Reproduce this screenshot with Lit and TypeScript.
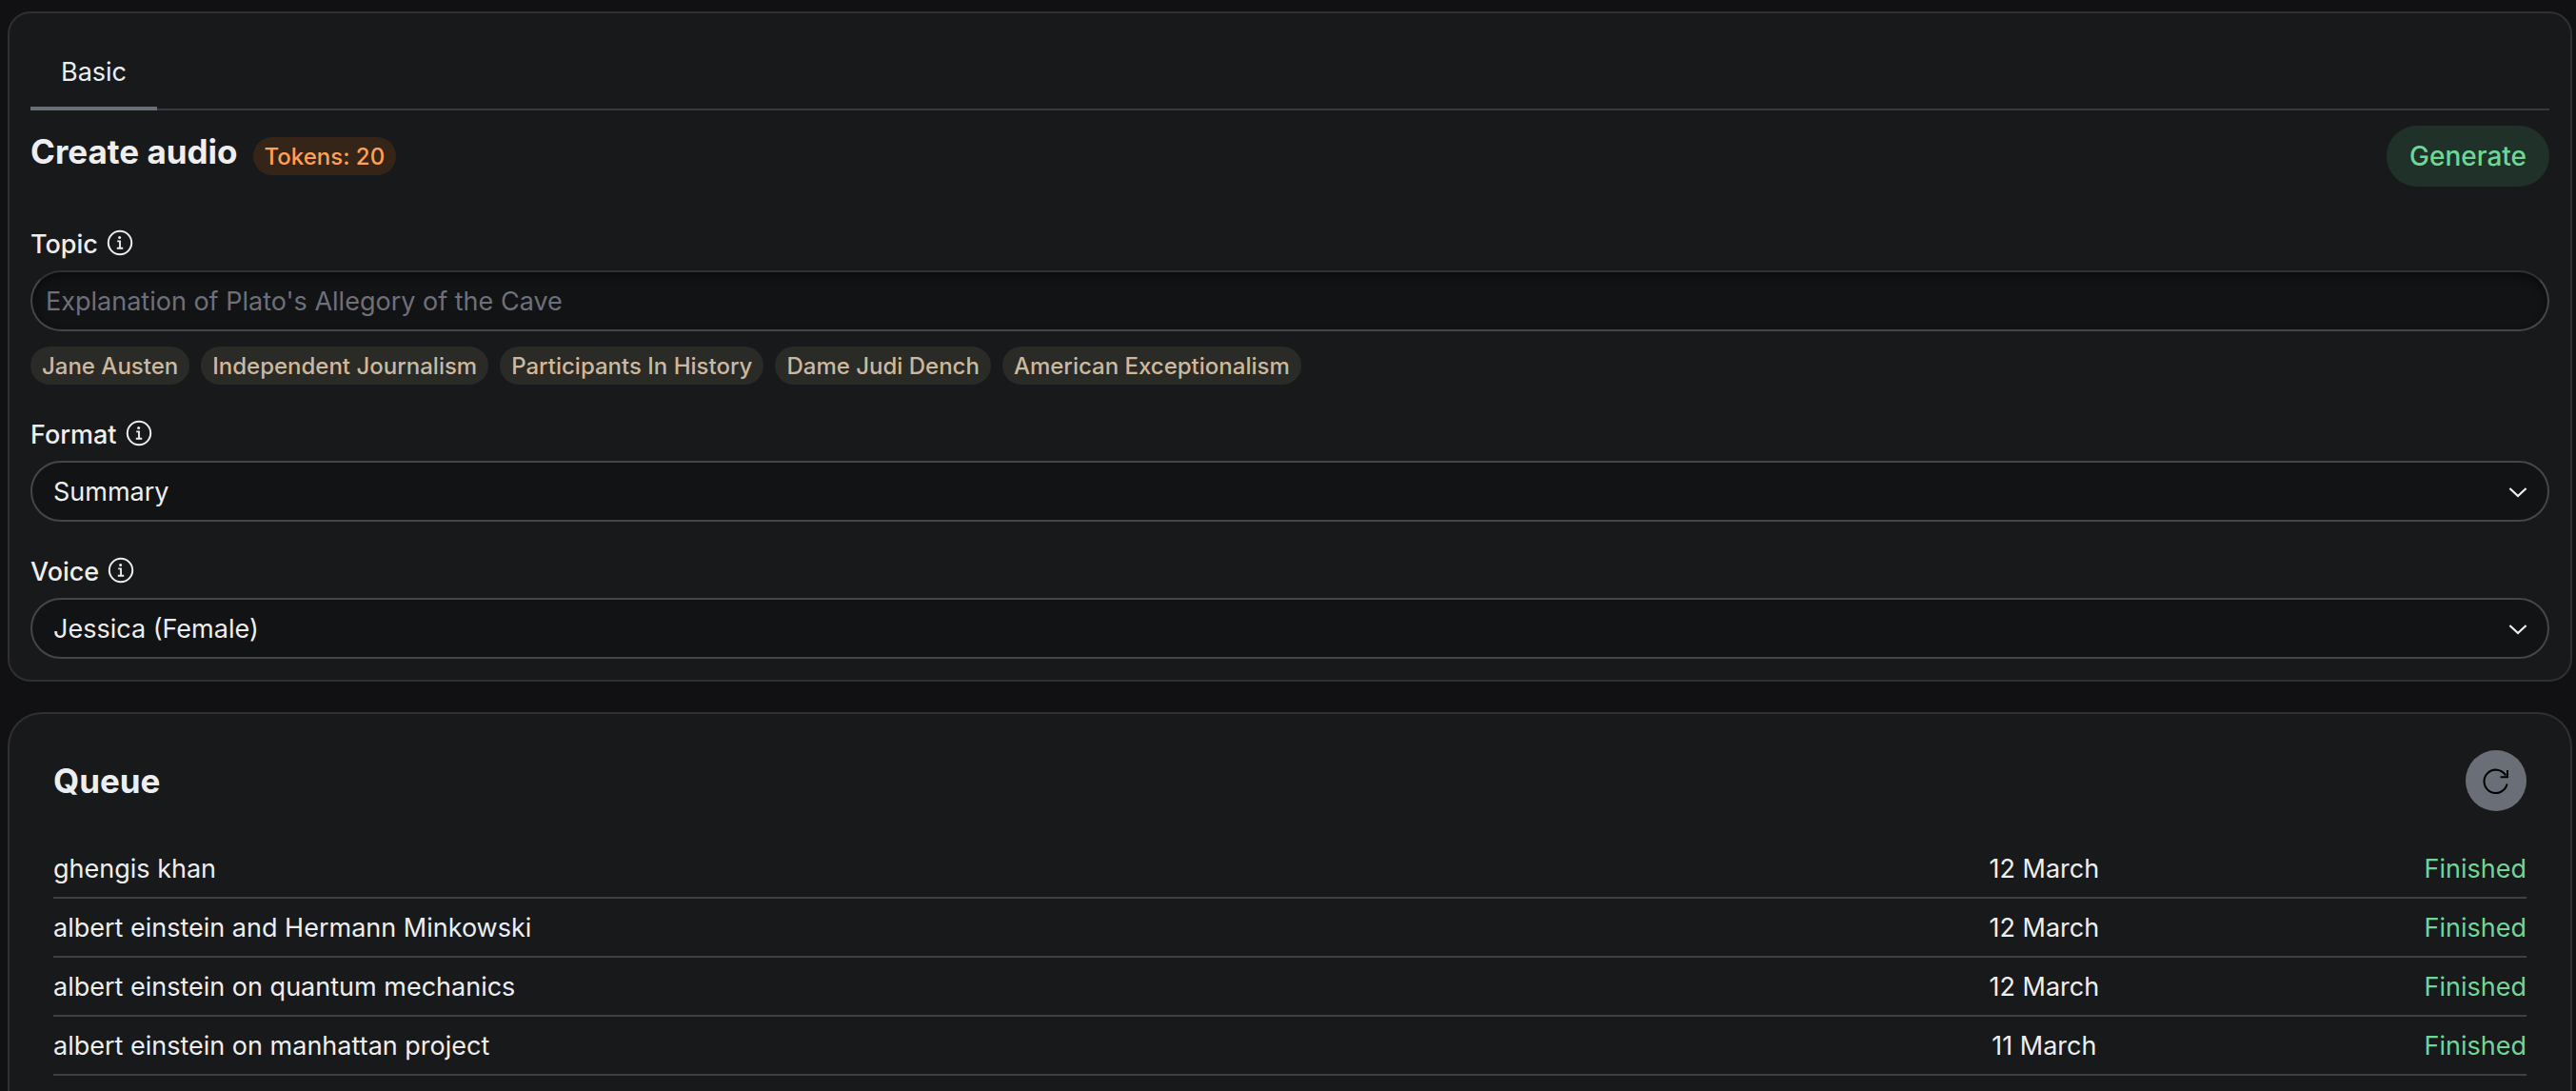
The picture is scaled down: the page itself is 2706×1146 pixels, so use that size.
import { LitElement, html, css, svg } from "lit";
import { customElement, property, state } from "lit/decorators.js";

interface Job {
  topic: string;
  date: string;
  status: string;
}

const SUGGESTIONS = [
  "Jane Austen",
  "Independent Journalism",
  "Participants In History",
  "Dame Judi Dench",
  "American Exceptionalism",
];

const JOBS: Job[] = [
  { topic: "ghengis khan", date: "12 March", status: "Finished" },
  { topic: "albert einstein and Hermann Minkowski", date: "12 March", status: "Finished" },
  { topic: "albert einstein on quantum mechanics", date: "12 March", status: "Finished" },
  { topic: "albert einstein on manhattan project", date: "11 March", status: "Finished" },
];

const infoIcon = svg`
  <circle cx="13" cy="13" r="12.2" fill="none" stroke="currentColor" stroke-width="2"/>
  <circle cx="12.6" cy="7.4" r="1.5" fill="currentColor"/>
  <path d="M10.2 11.4h2.8v7.2M9.8 18.8h6.4" fill="none" stroke="currentColor" stroke-width="1.9"/>`;

@customElement("info-label")
export class InfoLabel extends LitElement {
  @property() text = "";

  static styles = css`
    :host {
      display: flex;
      align-items: center;
      gap: 10px;
      height: 36px;
    }
    .text {
      line-height: 36px;
      padding-top: 2px;
    }
    .icon {
      width: 28px;
      height: 28px;
      flex: none;
      overflow: visible;
    }
  `;

  render() {
    return html`<span class="text">${this.text}</span>
      <svg class="icon" viewBox="0 0 28 28" aria-hidden="true">${infoIcon}</svg>`;
  }
}

@customElement("app-root")
export class AppRoot extends LitElement {
  @state() private topic = "";

  static styles = css`
    :host {
      display: block;
      background: #111113;
      color: #edeef0;
      font-family: Inter, "Liberation Sans", sans-serif;
      font-size: 27px;
      line-height: 36px;
    }
    * {
      box-sizing: border-box;
    }
    button,
    input,
    select {
      font: inherit;
      color: inherit;
      margin: 0;
    }
    .page {
      display: flex;
      flex-direction: column;
      gap: 32px;
      min-height: 100vh;
      padding: 12px 4px 0 8px;
    }
    .card {
      background: #18191b;
      border: 2px solid #2e3035;
      border-radius: 24px;
      padding: 22px;
    }
    .queue {
      flex: 1;
      border-bottom: 0;
      border-radius: 36px 36px 0 0;
      padding: 38px 46px 16px;
    }
    .tabs {
      display: flex;
      height: 80px;
      box-shadow: inset 0 -2px #363a3f;
    }
    .tab {
      border: 0;
      border-bottom: 4px solid #696e77;
      background: none;
      padding: 4px 32px 0;
    }
    .head {
      display: flex;
      align-items: flex-start;
      gap: 16px;
      margin-top: 16px;
      height: 64px;
    }
    .title {
      margin: 0;
      font-size: 35px;
      line-height: 54px;
      font-weight: 700;
    }
    .badge {
      border: 0;
      border-radius: 20px;
      height: 40px;
      padding: 2px 12px 0;
      font-size: 24px;
      line-height: 38px;
      font-weight: 500;
      white-space: nowrap;
    }
    .tokens {
      margin-top: 12px;
      background: #352518;
      color: #ffa057;
    }
    .generate {
      margin-left: auto;
      height: 64px;
      border: 0;
      border-radius: 32px;
      padding: 0 24px;
      background: #20312a;
      color: #6dd797;
      font-size: 28px;
      font-weight: 500;
    }
    .field {
      display: flex;
      flex-direction: column;
      gap: 10px;
      margin-top: 42px;
    }
    .field + .field {
      margin-top: 34px;
    }
    .caption {
      font-weight: 500;
    }
    .input,
    .select {
      width: 100%;
      height: 64px;
      border: 2px solid #43464c;
      border-radius: 32px;
      background: #121315;
    }
    .input {
      padding: 0 14px;
      border-top-color: #2f3235;
      box-shadow: inset 0 4px 8px #0a0b0c;
    }
    .input::placeholder {
      color: #6f6f7a;
      opacity: 1;
    }
    .tags {
      display: flex;
      flex-wrap: wrap;
      gap: 12px;
      margin-top: 6px;
    }
    .tag {
      background: #2a2a27;
      color: #cbb99f;
    }
    .pick {
      display: grid;
      align-items: center;
    }
    .pick > * {
      grid-area: 1 / 1;
    }
    .select {
      appearance: none;
      padding: 2px 56px 0 22px;
    }
    .chevron {
      justify-self: end;
      width: 20px;
      height: 16px;
      margin-right: 23px;
      pointer-events: none;
    }
    .bar {
      display: flex;
      align-items: center;
      justify-content: space-between;
      height: 64px;
    }
    .refresh {
      display: grid;
      place-items: center;
      width: 64px;
      height: 64px;
      padding: 0;
      border: 0;
      border-radius: 50%;
      background: #696e77;
      color: #000;
    }
    .arrow {
      width: 32px;
      height: 32px;
    }
    .jobs {
      width: 100%;
      margin-top: 30px;
      border-collapse: separate;
      border-spacing: 0;
      table-layout: fixed;
    }
    .cell {
      height: 62px;
      padding: 2px 0 0;
      border-bottom: 2px solid #3e4046;
      text-align: left;
    }
    .topic {
      width: 70%;
    }
    .date {
      width: 21%;
      text-align: center;
    }
    .status {
      width: 9%;
      text-align: right;
      color: #6dd797;
    }
  `;

  private chevron() {
    return html`<svg class="chevron" viewBox="0 0 20 16" aria-hidden="true">
      <path d="M1.4 5 10 13l8.6-8" fill="none" stroke="#edeef0" stroke-width="2.2" />
    </svg>`;
  }

  private picker(id: string, label: string, value: string) {
    return html`<div class="field">
      <label class="caption" for=${id}><info-label text=${label}></info-label></label>
      <div class="pick">
        <select class="select" id=${id}>
          <option>${value}</option>
        </select>
        ${this.chevron()}
      </div>
    </div>`;
  }

  render() {
    return html`<main class="page">
      <section class="card">
        <div class="tabs" role="tablist">
          <button class="tab" role="tab" aria-selected="true">Basic</button>
        </div>
        <div class="head">
          <h1 class="title">Create audio</h1>
          <span class="badge tokens">Tokens: 20</span>
          <button class="generate">Generate</button>
        </div>
        <div class="field">
          <label class="caption" for="topic"><info-label text="Topic"></info-label></label>
          <input
            class="input"
            id="topic"
            type="text"
            placeholder="Explanation of Plato's Allegory of the Cave"
            .value=${this.topic}
          />
          <div class="tags">
            ${SUGGESTIONS.map(
              (s) => html`<button class="badge tag" @click=${() => (this.topic = s)}>${s}</button>`
            )}
          </div>
        </div>
        ${this.picker("format", "Format", "Summary")}
        ${this.picker("voice", "Voice", "Jessica (Female)")}
      </section>
      <section class="card queue">
        <div class="bar">
          <h2 class="title">Queue</h2>
          <button class="refresh" aria-label="Refresh">
            <svg class="arrow" viewBox="0 0 32 32" aria-hidden="true">
              <path
                d="M27.6 19.6A12.2 12.2 0 1 1 26.2 10.6M28 5v7.2h-7.4"
                fill="none"
                stroke="currentColor"
                stroke-width="2"
              />
            </svg>
          </button>
        </div>
        <table class="jobs">
          <tbody>
            ${JOBS.map(
              (j) => html`<tr>
                <td class="cell topic">${j.topic}</td>
                <td class="cell date">${j.date}</td>
                <td class="cell status">${j.status}</td>
              </tr>`
            )}
          </tbody>
        </table>
      </section>
    </main>`;
  }
}
